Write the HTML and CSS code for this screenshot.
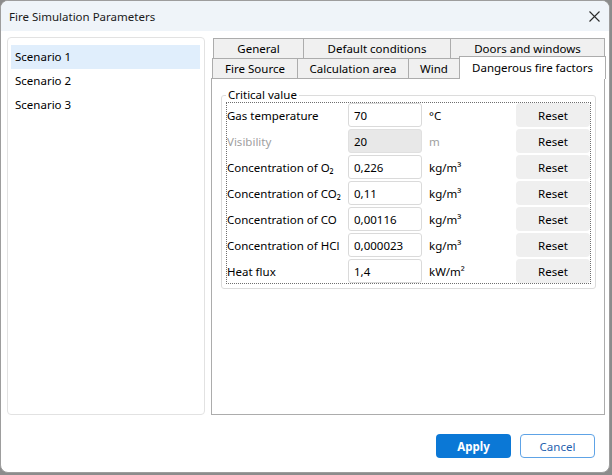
FILE: index.html
```html
<!DOCTYPE html>
<html>
<head>
<meta charset="utf-8">
<link rel="stylesheet" href="styles.css">
</head>
<body>
<div class="window">
  <div class="titlebar">
    <span class="title">Fire Simulation Parameters</span>
    <span class="close"><svg width="11" height="11" viewBox="0 0 11 11"><path d="M0.5 0.5L10.5 10.5M10.5 0.5L0.5 10.5" stroke="#2b2b2b" stroke-width="1.1" fill="none"/></svg></span>
  </div>
  <div class="main">
    <div class="scenarios">
      <div class="item selected">Scenario 1</div>
      <div class="item">Scenario 2</div>
      <div class="item">Scenario 3</div>
    </div>
    <div class="tabs">
      <div class="tabrow row1">
        <div class="tab t-general">General</div>
        <div class="tab t-default">Default conditions</div>
        <div class="tab t-doors">Doors and windows</div>
      </div>
      <div class="tabrow row2">
        <div class="tab t-fire">Fire Source</div>
        <div class="tab t-calc">Calculation area</div>
        <div class="tab t-wind">Wind</div>
        <div class="tab t-danger active">Dangerous fire factors</div>
      </div>
      <div class="panel">
        <fieldset class="group">
          <legend>Critical value</legend>
          <div class="grid">
            <div class="label">Gas temperature</div>
            <div class="field">70</div>
            <div class="unit">°C</div>
            <div class="reset">Reset</div>

            <div class="label disabled">Visibility</div>
            <div class="field disabled">20</div>
            <div class="unit disabled">m</div>
            <div class="reset">Reset</div>

            <div class="label">Concentration of O₂</div>
            <div class="field">0,226</div>
            <div class="unit">kg/m³</div>
            <div class="reset">Reset</div>

            <div class="label">Concentration of CO₂</div>
            <div class="field">0,11</div>
            <div class="unit">kg/m³</div>
            <div class="reset">Reset</div>

            <div class="label">Concentration of CO</div>
            <div class="field">0,00116</div>
            <div class="unit">kg/m³</div>
            <div class="reset">Reset</div>

            <div class="label">Concentration of HCl</div>
            <div class="field">0,000023</div>
            <div class="unit">kg/m³</div>
            <div class="reset">Reset</div>

            <div class="label">Heat flux</div>
            <div class="field">1,4</div>
            <div class="unit">kW/m²</div>
            <div class="reset">Reset</div>
          </div>
        </fieldset>
      </div>
    </div>
  </div>
  <div class="footer">
    <div class="btn primary">Apply</div>
    <div class="btn secondary">Cancel</div>
  </div>
</div>
</body>
</html>
```

FILE: styles.css
```css
* { box-sizing: border-box; }
html, body { margin: 0; padding: 0; }
body {
  width: 612px;
  height: 475px;
  background: #8c8c8c;
  font-family: "Noto Sans", "Open Sans", sans-serif;
  font-size: 11.5px;
  color: #111;
}
.window {
  width: 610px;
  height: 473px;
  border: 1px solid #9d9d9d;
  border-radius: 8px;
  background: #fff;
  overflow: hidden;
  display: flex;
  flex-direction: column;
}
.titlebar {
  height: 30px;
  flex: none;
  background: #eff4f9;
  display: flex;
  align-items: center;
  justify-content: space-between;
  padding: 0 9px 0 8px;
}
.title { font-size: 11.5px; color: #1a1a1a; }
.close { display: flex; width: 11px; height: 11px; margin-top: 1px; }
.main {
  flex: 1;
  display: flex;
  gap: 6px;
  padding: 6px 0 0 6px;
}
.scenarios {
  width: 198px;
  border: 1px solid #e2e2e2;
  border-radius: 4px;
  padding: 7px 4px 0 3px;
}
.item {
  height: 24px;
  line-height: 24px;
  padding-left: 4px;
  color: #000;
}
.item.selected { background: #e0eefc; }
.tabs {
  width: 394px;
  margin-top: 1px;
  display: flex;
  flex-direction: column;
}
.tabrow {
  display: flex;
  height: 20px;
  flex: none;
}
.row1 { padding-left: 2px; }
.row2 { padding-left: 1px; position: relative; z-index: 2; }
.tab {
  height: 20px;
  line-height: 19px;
  text-align: center;
  background: #f0f0f0;
  border: 1px solid #acacac;
  margin-right: -1px;
  color: #000;
  white-space: nowrap;
}
.row1 .tab { border-bottom: none; }
.row2 .tab { border-bottom: none; }
.t-general { width: 91px; }
.t-default { width: 148px; }
.t-doors { width: 155px; }
.t-fire { width: 86px; }
.t-calc { width: 112px; }
.t-wind { width: 52px; }
.t-danger { width: 147px; }
.tab.active {
  background: #fff;
  height: 23px;
  margin-top: -2px;
  line-height: 21px;
}
.panel {
  flex: 1;
  border: 1px solid #acacac;
  background: #fff;
  padding: 9px 8px 0 9px;
}
.group {
  margin: 0;
  border: 1px solid #dcdcdc;
  border-radius: 3px;
  padding: 0 4px 4px 4px;
}
.group legend {
  padding: 0 2px;
  margin-left: 0;
  line-height: 14px;
  color: #000;
}
.grid {
  border: 1px dotted #6f6f6f;
  display: grid;
  grid-template-columns: 121px 74px 94px 1fr;
  grid-auto-rows: 24px;
  row-gap: 2px;
}
.label {
  display: flex;
  align-items: center;
  color: #000;
  white-space: nowrap;
}
.label.disabled, .unit.disabled { color: #a0a0a0; }
.field {
  border: 1px solid #dadada;
  border-radius: 3px;
  background: #fff;
  padding-left: 5px;
  display: flex;
  align-items: center;
  color: #000;
}
.field.disabled { background: #e8e8e8; border-color: #e0e0e0; }
.unit {
  display: flex;
  align-items: center;
  padding-left: 7px;
  color: #000;
}
.reset {
  background: #efefef;
  border-radius: 4px;
  display: flex;
  align-items: center;
  justify-content: center;
  color: #000;
}
.footer {
  height: 57px;
  flex: none;
  display: flex;
  justify-content: flex-end;
  align-items: flex-start;
  gap: 9px;
  padding: 19px 14px 0 0;
}
.btn {
  width: 75px;
  height: 24px;
  border-radius: 4px;
  display: flex;
  align-items: center;
  justify-content: center;
}
.primary {
  background: #0b78d6;
  color: #fff;
  font-weight: bold;
}
.secondary {
  border: 1px solid #5ea3e6;
  color: #1f5fae;
  background: #fff;
}
```
